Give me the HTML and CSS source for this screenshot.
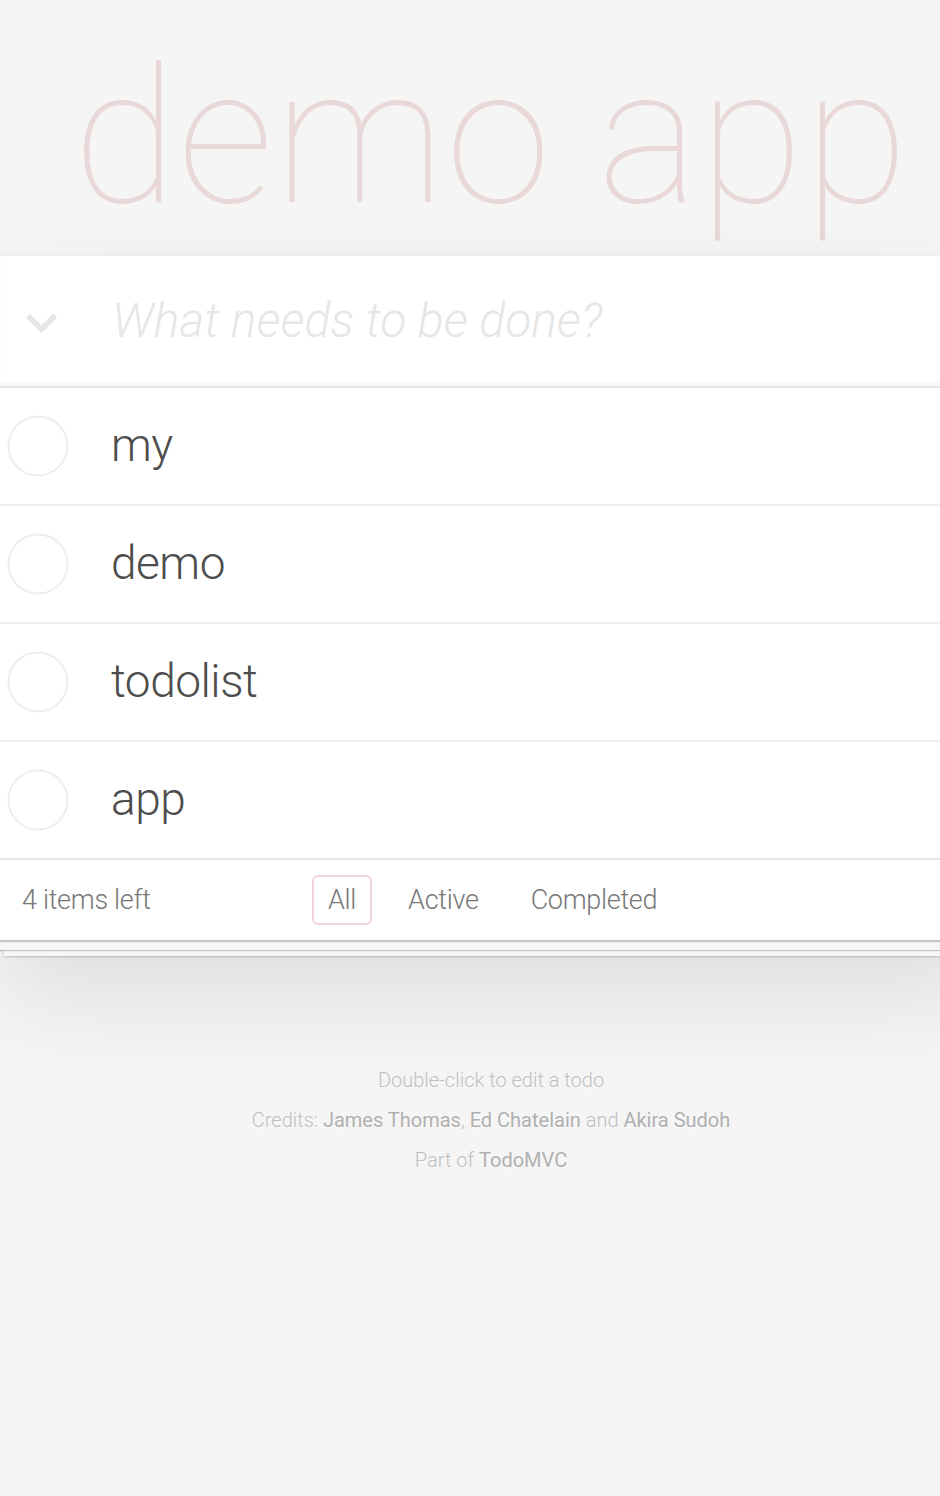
FILE: index.html
```html
<!DOCTYPE html>
<html lang="en">
<head>
<meta charset="utf-8">
<title>demo app</title>
<link rel="stylesheet" href="styles.css">
</head>
<body>
<div class="page">
  <header class="masthead">
    <h1 class="title">demo app</h1>
  </header>
  <section class="todoapp">
    <div class="new-row">
      <span class="toggle-all" aria-label="Mark all as complete">
        <svg width="40" height="28" viewBox="0 0 40 28"><path d="M0 7 L5 2 L20 17 L35 2 L40 7 L20 27 Z" fill="#e6e6e6"/></svg>
      </span>
      <input class="new-todo" type="text" placeholder="What needs to be done?">
    </div>
    <ul class="todo-list">
      <li class="todo">
        <span class="check"><svg width="62" height="62" viewBox="0 0 62 62"><circle cx="31" cy="31" r="29.5" fill="none" stroke="#ededed" stroke-width="2"/></svg></span>
        <label class="todo-label">my</label>
      </li>
      <li class="todo">
        <span class="check"><svg width="62" height="62" viewBox="0 0 62 62"><circle cx="31" cy="31" r="29.5" fill="none" stroke="#ededed" stroke-width="2"/></svg></span>
        <label class="todo-label">demo</label>
      </li>
      <li class="todo">
        <span class="check"><svg width="62" height="62" viewBox="0 0 62 62"><circle cx="31" cy="31" r="29.5" fill="none" stroke="#ededed" stroke-width="2"/></svg></span>
        <label class="todo-label">todolist</label>
      </li>
      <li class="todo">
        <span class="check"><svg width="62" height="62" viewBox="0 0 62 62"><circle cx="31" cy="31" r="29.5" fill="none" stroke="#ededed" stroke-width="2"/></svg></span>
        <label class="todo-label">app</label>
      </li>
    </ul>
    <footer class="footer">
      <span class="todo-count"><strong>4</strong> items left</span>
      <ul class="filters">
        <li><a class="filter selected" href="#/">All</a></li>
        <li><a class="filter" href="#/active">Active</a></li>
        <li><a class="filter" href="#/completed">Completed</a></li>
      </ul>
    </footer>
  </section>
  <footer class="info">
    <p>Double-click to edit a todo</p>
    <p>Credits: <a href="#">James Thomas</a>, <a href="#">Ed Chatelain</a> and <a href="#">Akira Sudoh</a></p>
    <p>Part of <a href="#">TodoMVC</a></p>
  </footer>
</div>
</body>
</html>
```
FILE: styles.css
```css
html, body {
  margin: 0;
  padding: 0;
  overflow: hidden;
}

body {
  background: #f5f5f5;
  color: #4d4d4d;
  font-family: Roboto, "Helvetica Neue", "Liberation Sans", sans-serif;
  font-weight: 300;
  min-height: 1496px;
}

.page {
  width: 982px;
}

.masthead {
  height: 256px;
  box-sizing: border-box;
  padding-top: 17px;
}

.title {
  margin: 0;
  font-size: 190px;
  font-weight: 100;
  line-height: 240px;
  letter-spacing: 1px;
  text-align: center;
  color: rgba(175, 47, 47, 0.15);
}

.todoapp {
  background: #fff;
  box-shadow:
    0 2px 1px rgba(0, 0, 0, 0.2),
    0 10px 0 0 #f6f6f6,
    0 11px 1px 0 rgba(0, 0, 0, 0.2),
    0 20px 0 -4px #f6f6f6,
    0 21px 2px -4px rgba(0, 0, 0, 0.2),
    0 4px 8px 0 rgba(0, 0, 0, 0.12),
    0 50px 100px 0 rgba(0, 0, 0, 0.1);
}

.new-row {
  display: flex;
  align-items: center;
  height: 130px;
  box-shadow: inset 0 -4px 2px rgba(0, 0, 0, 0.03);
  border-bottom: 2px solid #e6e6e6;
}

.toggle-all {
  display: flex;
  width: 36px;
  margin-left: 26px;
  margin-right: 50px;
  padding-top: 4px;
}

.toggle-all svg {
  width: 31px;
  height: 22px;
}

.new-todo {
  flex: 1;
  border: none;
  outline: none;
  background: transparent;
  padding: 0;
  font-family: Roboto, "Helvetica Neue", "Liberation Sans", sans-serif;
  font-size: 48px;
  font-weight: 300;
  line-height: 1.4;
  color: #4d4d4d;
}

.new-todo::placeholder {
  font-style: italic;
  font-weight: 300;
  color: #e6e6e6;
}

.todo-list {
  list-style: none;
  margin: 0;
  padding: 0;
}

.todo {
  display: flex;
  align-items: center;
  height: 116px;
  border-bottom: 2px solid #ededed;
}

.todo:last-child {
  border-bottom: none;
}

.check {
  display: flex;
  width: 62px;
  height: 62px;
  margin-left: 7px;
  margin-right: 42px;
}

.todo-label {
  font-size: 46px;
  line-height: 1.2;
  letter-spacing: -0.5px;
  color: #4d4d4d;
}

.footer {
  display: flex;
  align-items: center;
  height: 80px;
  padding-left: 22px;
  border-top: 2px solid #e6e6e6;
  color: #777;
  font-size: 27px;
  letter-spacing: -0.3px;
}

.todo-count {
  width: 284px;
}

.todo-count strong {
  font-weight: 300;
}

.filters {
  display: flex;
  gap: 8px;
  list-style: none;
  margin: 0;
  padding: 0;
}

.filter {
  display: block;
  margin: 6px;
  padding: 4px 14px;
  line-height: 38px;
  border: 2px solid transparent;
  border-radius: 6px;
  color: inherit;
  text-decoration: none;
}

.filter.selected {
  border-color: rgba(175, 47, 47, 0.2);
}

.info {
  margin-top: 130px;
  color: #bfbfbf;
  font-size: 20px;
  line-height: 20px;
  text-align: center;
  text-shadow: 0 2px 0 rgba(255, 255, 255, 0.5);
}

.info p {
  margin: 20px 0;
}

.info p:first-child {
  margin-top: 0;
}

.info a {
  color: #b0b0b0;
  font-weight: 400;
  text-decoration: none;
}
```
